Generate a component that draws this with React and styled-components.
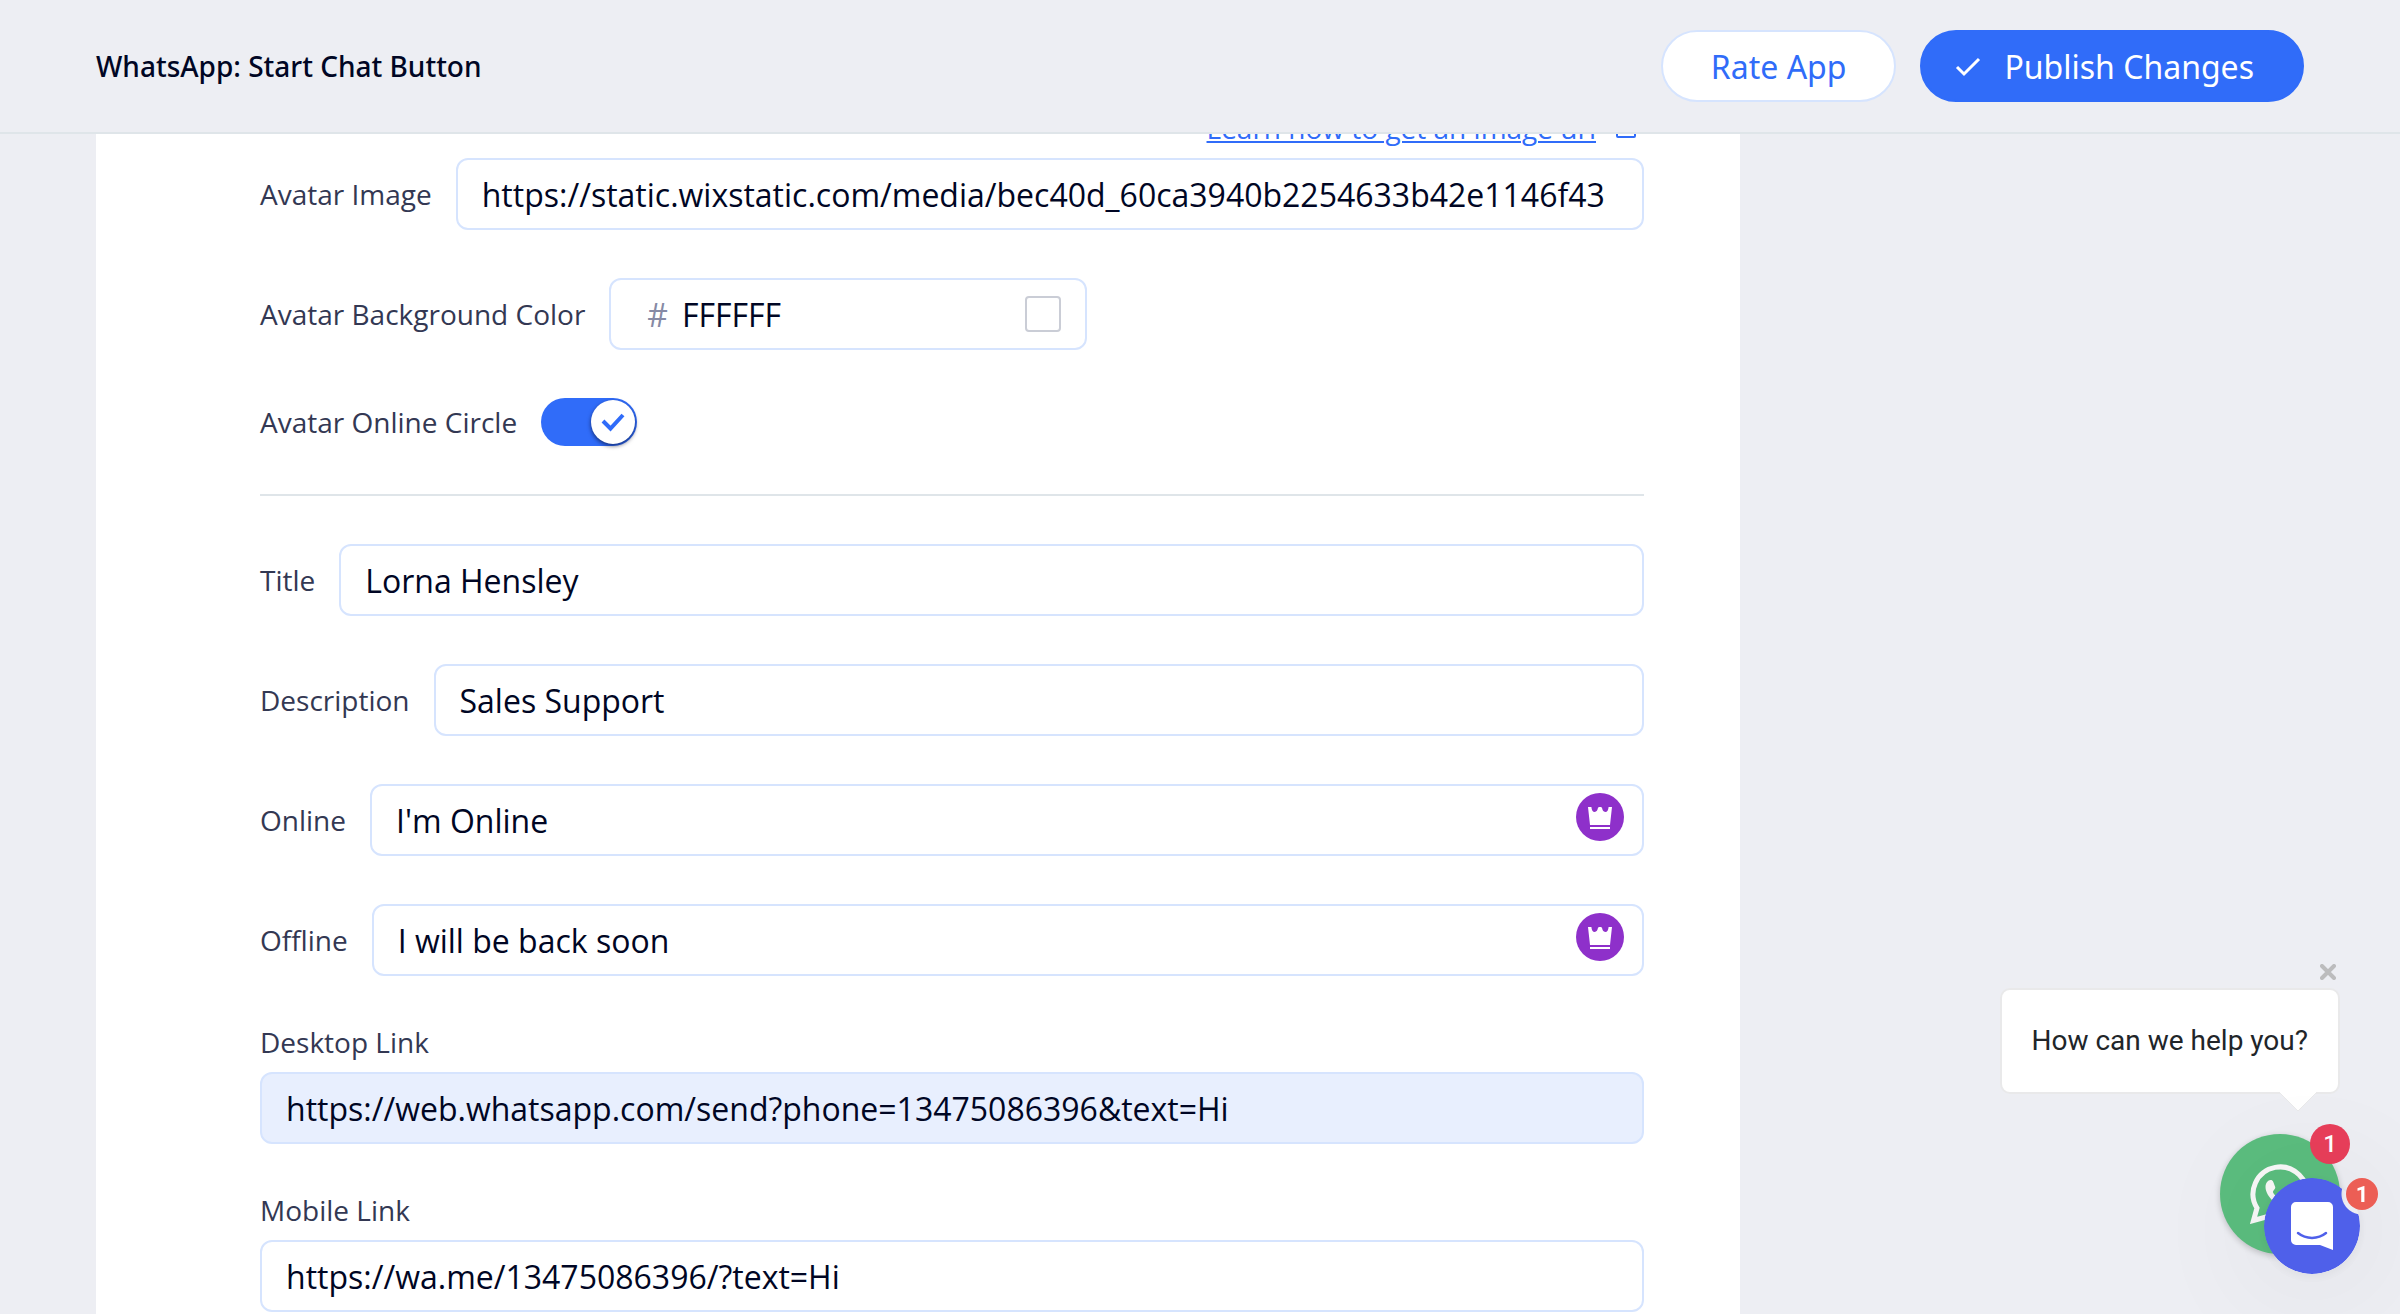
import React, { useState } from "react";
import styled, { createGlobalStyle } from "styled-components";

const GlobalStyle = createGlobalStyle`
  *,
  *::before,
  *::after {
    box-sizing: border-box;
  }

  body {
    margin: 0;
    background-color: #edeef3;
    color: #000624;
    font-family: "Open Sans", "Noto Sans", sans-serif;
  }

  button,
  input {
    font-family: inherit;
  }
`;

const Page = styled.div`
  height: 100vh;
  display: flex;
  flex-direction: column;
`;

const Header = styled.header`
  display: flex;
  align-items: center;
  justify-content: space-between;
  padding: 30px 96px;
  border-bottom: 2px solid #dfe5e9;
`;

const Title = styled.h1`
  margin: 0;
  font-family: "Noto Sans", sans-serif;
  font-size: 28px;
  line-height: 36px;
  font-weight: 500;
`;

const Actions = styled.div`
  display: flex;
  gap: 24px;
`;

const ActionButton = styled.button`
  display: flex;
  align-items: center;
  gap: 18px;
  height: 72px;
  padding: ${(props) => (props.$primary ? "0 48px 0 28px" : "0 48px")};
  border: 2px solid ${(props) => (props.$primary ? "#306cf9" : "#d6e4fe")};
  border-radius: 36px;
  background-color: ${(props) => (props.$primary ? "#306cf9" : "white")};
  color: ${(props) => (props.$primary ? "white" : "#306cf9")};
  font-family: "Noto Sans", sans-serif;
  font-size: 32px;
  cursor: pointer;
`;

const Main = styled.main`
  flex: 1;
  min-height: 0;
  overflow: hidden;
  padding: 0 96px;
  display: grid;
  grid-template-columns: repeat(12, 1fr);
  column-gap: 48px;
`;

const Card = styled.section`
  grid-column: span 9;
  padding: 0 96px 0 164px;
  background-color: white;
`;

/* the form is scrolled a little under the header */
const Form = styled.form`
  display: flex;
  flex-direction: column;
  gap: 48px;
  margin-top: -24px;
`;

const Group = styled.div`
  display: flex;
  flex-direction: column;
  gap: 12px;
`;

const Row = styled.div`
  display: flex;
  align-items: center;
  gap: 24px;
`;

const HelpRow = styled.div`
  display: flex;
  align-items: center;
  justify-content: flex-end;
  gap: 12px;
`;

const HelpLink = styled.a`
  color: #306cf9;
  font-size: 28px;
  line-height: 36px;
  text-decoration: underline;
  text-decoration-thickness: 2px;
  text-underline-offset: 2px;
`;

const Label = styled.label`
  color: #333853;
  font-size: 28px;
  line-height: 36px;
  white-space: nowrap;
`;

const InputBox = styled.div`
  position: relative;
  flex: 1;
  min-width: 0;
  display: flex;
`;

const Input = styled.input`
  flex: 1;
  min-width: 0;
  height: 72px;
  padding: 0 18px 0 24px;
  border: 2px solid #d6e4fe;
  border-radius: 12px;
  background-color: white;
  color: #000624;
  font-size: 32px;
  outline: none;
`;

const StackedInput = styled(Input)`
  flex: none;
  width: 100%;
  background-color: ${(props) => (props.$filled ? "#e8effe" : "white")};
`;

const PremiumBadge = styled.span`
  position: absolute;
  top: 9px;
  right: 20px;
  width: 48px;
  height: 48px;
`;

const ColorBox = styled.div`
  display: flex;
  align-items: center;
  gap: 14px;
  width: 478px;
  height: 72px;
  padding: 0 24px 0 36px;
  border: 2px solid #d6e4fe;
  border-radius: 12px;
`;

const Hash = styled.span`
  color: #868aa5;
  font-size: 32px;
`;

const ColorInput = styled.input`
  flex: 1;
  min-width: 0;
  padding: 0;
  border: none;
  background: none;
  color: #000624;
  font-size: 32px;
  outline: none;
`;

const Swatch = styled.button`
  width: 36px;
  height: 36px;
  padding: 0;
  border: 2px solid #cacdd6;
  border-radius: 4px;
  background-color: white;
  cursor: pointer;
`;

const Switch = styled.span`
  position: relative;
  display: flex;
`;

const SwitchInput = styled.input`
  appearance: none;
  width: 96px;
  height: 48px;
  margin: 0;
  border-radius: 24px;
  background-color: #306cf9;
  cursor: pointer;
`;

const Knob = styled.span`
  position: absolute;
  top: 2px;
  right: 2px;
  width: 44px;
  height: 44px;
  border-radius: 50%;
  background-color: white;
  box-shadow: 0 2px 4px rgba(0, 6, 36, 0.6);
  pointer-events: none;
`;

const Divider = styled.hr`
  width: 100%;
  height: 2px;
  margin: 0;
  border: none;
  background-color: #dfe5e9;
`;

const ChatWidget = styled.aside`
  position: fixed;
  right: 60px;
  bottom: 60px;
  display: flex;
  flex-direction: column;
  align-items: flex-end;
  font-family: Roboto, sans-serif;
`;

const CloseButton = styled.button`
  display: flex;
  margin: 0 4px 8px 0;
  padding: 0;
  border: none;
  background: none;
  cursor: pointer;
`;

const Bubble = styled.div`
  position: relative;
  margin-bottom: 40px;
  padding: 33px 30px;
  border: 2px solid #e9e9ea;
  border-radius: 10px;
  background-color: white;
  color: #212529;
  font-size: 28px;
  line-height: 36px;
`;

const Tail = styled.svg`
  position: absolute;
  top: 100%;
  right: 22px;
`;

const WhatsAppButton = styled.button`
  position: relative;
  display: flex;
  align-items: center;
  justify-content: center;
  width: 120px;
  height: 120px;
  padding: 0;
  border: none;
  border-radius: 50%;
  background-color: #5bbd7e;
  box-shadow: 0 2px 6px rgba(0, 0, 0, 0.2);
  color: white;
  cursor: pointer;
`;

const Count = styled.span`
  position: absolute;
  top: ${(props) => (props.$small ? "0" : "-10px")};
  right: ${(props) => (props.$small ? "-18px" : "-10px")};
  display: flex;
  align-items: center;
  justify-content: center;
  width: ${(props) => (props.$small ? "32px" : "40px")};
  height: ${(props) => (props.$small ? "32px" : "40px")};
  border-radius: 50%;
  background-color: ${(props) => (props.$small ? "#ec5e55" : "#e83e5a")};
  color: white;
  font-family: Roboto, sans-serif;
  font-size: ${(props) => (props.$small ? "22px" : "24px")};
  font-weight: ${(props) => (props.$small ? "700" : "500")};
`;

const Messenger = styled.button`
  position: fixed;
  right: 40px;
  bottom: 40px;
  width: 96px;
  height: 96px;
  padding: 0;
  border: none;
  border-radius: 50%;
  background: none;
  box-shadow: 0 2px 12px rgba(0, 0, 0, 0.06), 0 4px 128px rgba(0, 0, 0, 0.1);
  cursor: pointer;
`;

/* round face with a bite taken out for the counter */
const MessengerFace = styled.span`
  display: flex;
  align-items: center;
  justify-content: center;
  width: 96px;
  height: 96px;
  border-radius: 50%;
  background-color: #4f60ea;
  mask-image: radial-gradient(circle at 98px 16px, transparent 20px, black 21px);
`;

const CrownIcon = () => (
  <svg width="48" height="48" viewBox="0 0 48 48" aria-hidden="true">
    <circle cx="24" cy="24" r="24" fill="#8e30ca" />
    <path
      fill="white"
      d="M12 14h3.400c.2 3 1.400 5 3.300 5 1.900 0 3-2 3.300-4.200.2-.6.900-.8 2-.8s1.800.2 2 .8c.3 2.200 1.400 4.200 3.300 4.200 1.900 0 3.100-2 3.300-5H36l-2 18H14L12 14z"
    />
    <path fill="white" d="M14 34h20v2H14z" />
  </svg>
);

const Field = ({ id, label, value, premium }) => (
  <Row>
    <Label htmlFor={id}>{label}</Label>
    <InputBox>
      <Input id={id} type="text" defaultValue={value} />
      {premium && (
        <PremiumBadge>
          <CrownIcon />
        </PremiumBadge>
      )}
    </InputBox>
  </Row>
);

const LinkField = ({ id, label, value, filled }) => (
  <Group>
    <Label htmlFor={id}>{label}</Label>
    <StackedInput id={id} type="text" defaultValue={value} $filled={filled} />
  </Group>
);

const App = () => {
  const [online, setOnline] = useState(true);

  return (
    <>
      <GlobalStyle />
      <Page>
        <Header>
          <Title>WhatsApp: Start Chat Button</Title>
          <Actions>
            <ActionButton type="button">Rate App</ActionButton>
            <ActionButton type="button" $primary>
              <svg width="36" height="36" viewBox="0 0 36 36" fill="none" aria-hidden="true">
                <path d="M7 19l7 7L29 11" stroke="white" strokeWidth="3" />
              </svg>
              Publish Changes
            </ActionButton>
          </Actions>
        </Header>
        <Main>
          <Card>
            <Form>
              <Group>
                <HelpRow>
                  <HelpLink href="#image-url">Learn how to get an image url</HelpLink>
                  <svg width="36" height="36" viewBox="0 0 36 36" fill="none" aria-hidden="true">
                    <path
                      d="M18 9h-7a2 2 0 0 0-2 2v15a1 1 0 0 0 1 1h16a1 1 0 0 0 1-1v-8M21 8h7v7M28 8L17 19"
                      stroke="#306cf9"
                      strokeWidth="2"
                    />
                  </svg>
                </HelpRow>
                <Field
                  id="avatar-image"
                  label="Avatar Image"
                  value="https://static.wixstatic.com/media/bec40d_60ca3940b2254633b42e1146f43"
                />
              </Group>
              <Row>
                <Label htmlFor="avatar-color">Avatar Background Color</Label>
                <ColorBox>
                  <Hash>#</Hash>
                  <ColorInput id="avatar-color" type="text" defaultValue="FFFFFF" />
                  <Swatch type="button" aria-label="Pick color" />
                </ColorBox>
              </Row>
              <Row>
                <Label htmlFor="avatar-online">Avatar Online Circle</Label>
                <Switch>
                  <SwitchInput
                    id="avatar-online"
                    type="checkbox"
                    checked={online}
                    onChange={() => setOnline(!online)}
                  />
                  <Knob>
                    <svg width="44" height="44" viewBox="0 0 44 44" fill="none" aria-hidden="true">
                      <path d="M12 21l7.500 7.500L32 15" stroke="#306cf9" strokeWidth="4" />
                    </svg>
                  </Knob>
                </Switch>
              </Row>
              <Divider />
              <Field id="title" label="Title" value="Lorna Hensley" />
              <Field id="description" label="Description" value="Sales Support" />
              <Field id="online" label="Online" value="I'm Online" premium />
              <Field id="offline" label="Offline" value="I will be back soon" premium />
              <LinkField
                id="desktop-link"
                label="Desktop Link"
                value="https://web.whatsapp.com/send?phone=13475086396&text=Hi"
                filled
              />
              <LinkField
                id="mobile-link"
                label="Mobile Link"
                value="https://wa.me/13475086396/?text=Hi"
              />
            </Form>
          </Card>
        </Main>
      </Page>
      <ChatWidget>
        <CloseButton type="button" aria-label="Close">
          <svg width="16" height="16" viewBox="0 0 16 16" aria-hidden="true">
            <path
              d="M2 2l12 12M14 2L2 14"
              stroke="#bcbcbd"
              strokeWidth="4"
              strokeLinecap="round"
            />
          </svg>
        </CloseButton>
        <Bubble>
          How can we help you?
          <Tail width="36" height="20" viewBox="0 0 36 20" aria-hidden="true">
            <path d="M0 1l18 18L36 1" fill="white" stroke="#e9e9ea" strokeWidth="1" />
            <path d="M0 0h36v1H0z" fill="white" />
          </Tail>
        </Bubble>
        <WhatsAppButton type="button" aria-label="WhatsApp">
          <svg width="60" height="60" viewBox="0 0 60 60" fill="none" aria-hidden="true">
            <path
              d="M7 44A27 27 0 1 1 16 53L3.500 56.500Z"
              stroke="#f8f8f8"
              strokeWidth="5"
            />
            <path
              fill="#f8f8f8"
              d="M15.500 23c0-4 2.500-7 5-7 1.500 0 2.200.5 2.700 1.800l2 5.200c.6 1.600-2.200 3.500-2.200 5 0 1.800 6.500 8.500 9 9.200 1.500.4 3.500-3.200 5-2.700l6 3c1 .5 1.500 1 1.300 2-.6 3.500-4 5.500-7.300 5.500-7 0-21.500-12-21.500-22z"
            />
          </svg>
          <Count>1</Count>
        </WhatsAppButton>
      </ChatWidget>
      <Messenger type="button" aria-label="Open messenger">
        <MessengerFace>
          <svg width="42" height="48" viewBox="0 0 42 48" fill="none" aria-hidden="true">
            <path
              fill="white"
              d="M5 0h32a5 5 0 0 1 5 5v43l-13-5H5a5 5 0 0 1-5-5V5a5 5 0 0 1 5-5z"
            />
            <path
              d="M7 31c8 6.500 20 6.500 28 0"
              stroke="#4f60ea"
              strokeWidth="2.500"
              strokeLinecap="round"
            />
          </svg>
        </MessengerFace>
        <Count $small>1</Count>
      </Messenger>
    </>
  );
};

export default App;
